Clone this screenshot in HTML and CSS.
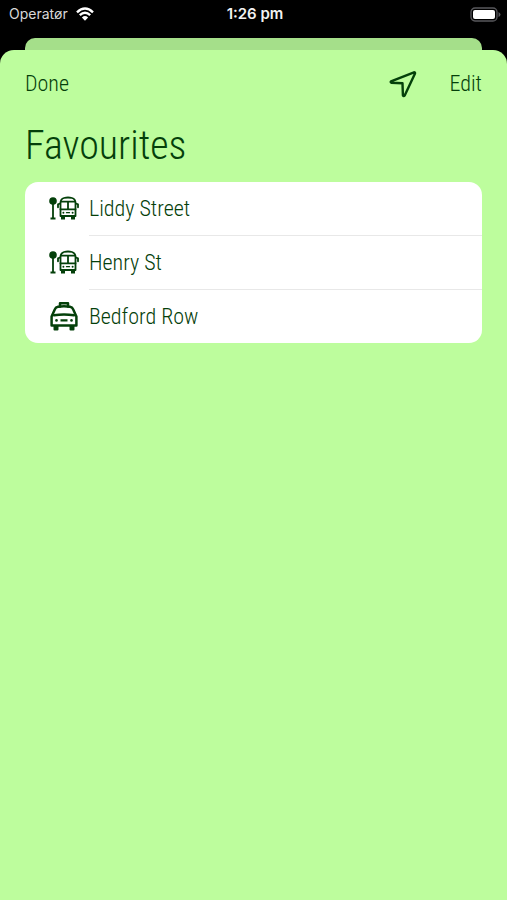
FILE: index.html
```html
<!DOCTYPE html>
<html lang="en">
<head>
<meta charset="utf-8">
<meta name="viewport" content="width=device-width, initial-scale=1">
<title>Favourites</title>
<link rel="stylesheet" href="styles.css">
</head>
<body>
<svg class="symbols" aria-hidden="true">
  <symbol id="bus" viewBox="0 0 30 26">
    <circle cx="4" cy="5" r="3.800" fill="currentColor"/>
    <path d="M4 7v15.500M1.500 22.500h5" fill="none" stroke="currentColor" stroke-width="1.800"/>
    <g fill="none" stroke="currentColor" stroke-width="1.800" stroke-linejoin="round" stroke-linecap="round">
      <path d="M11.500 20h15V7q0-4-3.500-5-4-1-8 0-3.500 1-3.500 5z"/>
      <path d="M12 5.700h14M19 6v7M11.500 13.300h15"/>
      <path d="M11 7.500l-2 .8v3M27 7.500l2 .8v3"/>
      <path d="M17.500 16.700h3" stroke-width="1.300"/>
    </g>
    <path d="M12 20h4v3.500h-4zM22 20h4v3.500h-4z" fill="currentColor"/>
    <circle cx="14.400" cy="16.700" r="1" fill="currentColor"/>
    <circle cx="23.600" cy="16.700" r="1" fill="currentColor"/>
  </symbol>
  <symbol id="taxi" viewBox="0 0 30 30">
    <g fill="none" stroke="currentColor" stroke-width="2.500" stroke-linejoin="round" stroke-linecap="round">
      <path d="M11 4.500v-3.200h8v3.200"/>
      <path d="M2.600 23.500V14.500L6 7q.8-2 3-2.300 6-.8 12 0 2.200.3 3 2.300l3.400 7.500v9z"/>
      <path d="M5 13.200q10-1.500 20 0"/>
    </g>
    <path d="M4.500 23.500h5v4q0 1-1 1h-3q-1 0-1-1zM20.500 23.500h5v4q0 1-1 1h-3q-1 0-1-1z" fill="currentColor"/>
    <path d="M11.500 18.400h7" stroke="currentColor" stroke-width="2.400"/>
    <circle cx="7.500" cy="18.400" r="1.300" fill="currentColor"/>
    <circle cx="22.500" cy="18.400" r="1.300" fill="currentColor"/>
  </symbol>
</svg>
<div class="screen">
  <header class="status">
    <div class="carrier">
      <span>Operatør</span>
      <svg class="wifi" viewBox="0 0 18 14" aria-hidden="true">
        <g fill="none" stroke="currentColor" stroke-width="2.400">
          <path d="M1 5.300Q9-2.300 17 5.300"/>
          <path d="M3.800 8.200Q9 3.200 14.200 8.200"/>
        </g>
        <path d="M5.900 10.500Q9 7.700 12.100 10.500L9 13.700z" fill="currentColor"/>
      </svg>
    </div>
    <time class="clock">1:26 pm</time>
    <svg class="battery" viewBox="0 0 31 15" aria-hidden="true">
      <rect x="1" y="1" width="26" height="13" rx="4" fill="none" stroke="#58585c" stroke-width="1.300"/>
      <rect x="3" y="3" width="22" height="9" rx="2" fill="#fff"/>
      <path d="M28.500 5v5q2-1 2-2.500t-2-2.500z" fill="#58585c"/>
    </svg>
  </header>
  <div class="back-sheet"></div>
  <main class="sheet">
    <nav class="toolbar">
      <button class="action" type="button">Done</button>
      <div class="tools">
        <button class="action" type="button" aria-label="Nearby">
          <svg class="arrow" viewBox="0 0 28 28" aria-hidden="true">
            <path d="M25 2.300L2 11.300q-.8.900.3 1.500l11.200.5.400 12q.8 1.300 1.800.2L26 3.500q.2-1.200-1-1.200z" fill="none" stroke="currentColor" stroke-width="2.400" stroke-linejoin="round"/>
          </svg>
        </button>
        <button class="action" type="button">Edit</button>
      </div>
    </nav>
    <h1 class="title">Favourites</h1>
    <ul class="list">
      <li class="row"><svg class="icon" aria-hidden="true"><use href="#bus"/></svg><span class="name">Liddy Street</span></li>
      <li class="row"><svg class="icon" aria-hidden="true"><use href="#bus"/></svg><span class="name">Henry St</span></li>
      <li class="row"><svg class="icon" aria-hidden="true"><use href="#taxi"/></svg><span class="name">Bedford Row</span></li>
    </ul>
  </main>
</div>
</body>
</html>
```
FILE: styles.css
```css
* {
  box-sizing: border-box;
}

body {
  margin: 0;
  background: #000;
  color: #04400a;
  font-family: "Roboto Condensed", "Liberation Sans Narrow", sans-serif;
  font-weight: 350;
}

.symbols {
  display: none;
}

.screen {
  display: flex;
  flex-direction: column;
  min-height: 100vh;
}

.status {
  display: grid;
  grid-template-columns: 1fr auto 1fr;
  align-items: center;
  height: 28px;
  margin-bottom: 10px;
  padding: 0 6px 0 9px;
  color: #f2f2f2;
  font-family: Inter, sans-serif;
  font-size: 14px;
  font-weight: 400;
  line-height: 20px;
}

.carrier {
  display: flex;
  align-items: center;
  gap: 8px;
  color: #d8d8d8;
}

.wifi {
  width: 18px;
  height: 14px;
  color: #fff;
}

.clock {
  font-size: 15px;
  font-weight: 600;
}

.battery {
  justify-self: end;
  width: 31px;
  height: 15px;
}

.back-sheet {
  height: 12px;
  margin: 0 25px;
  border-radius: 10px 10px 0 0;
  background: #a5df8a;
}

.sheet {
  flex: 1;
  padding: 16px 25px;
  border-radius: 14px 14px 0 0;
  background: #bdfd9d;
}

.toolbar,
.tools {
  display: flex;
  align-items: center;
}

.toolbar {
  justify-content: space-between;
  height: 36px;
}

.tools {
  gap: 32px;
}

.action {
  display: flex;
  padding: 0;
  border: 0;
  background: none;
  color: inherit;
  font: inherit;
  font-size: 22px;
  line-height: 28px;
}

.arrow {
  width: 28px;
  height: 28px;
}

.title {
  margin: 20px 0 12px;
  font-size: 40px;
  font-weight: inherit;
  line-height: 48px;
}

.list {
  margin: 0;
  padding: 0;
  overflow: hidden;
  border-radius: 13px;
  background: #fff;
  list-style: none;
}

.row {
  display: flex;
  align-items: center;
  gap: 10px;
  padding-left: 24px;
}

.icon {
  width: 30px;
  height: 30px;
}

.name {
  flex: 1;
  height: 54px;
  border-bottom: 1px solid #e8e8e8;
  font-size: 22px;
  line-height: 53px;
}

.row:last-child .name {
  height: 53px;
  border-bottom: 0;
}
```
